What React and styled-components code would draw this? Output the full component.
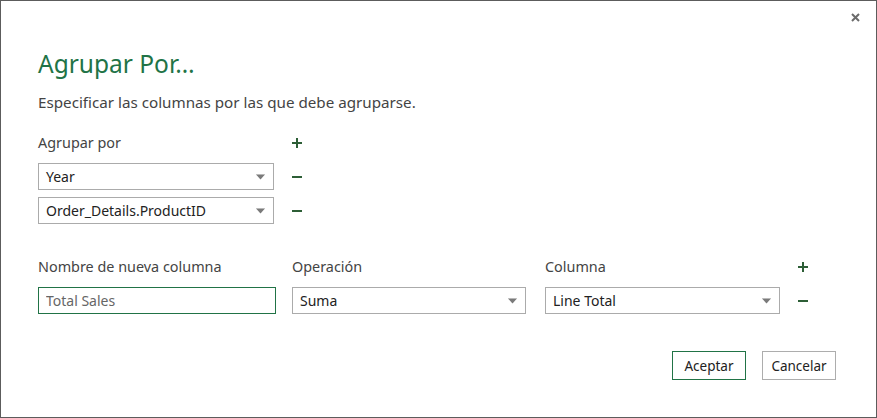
import styled, { createGlobalStyle } from 'styled-components'

const Global = createGlobalStyle`
  html, body { margin: 0; padding: 0; background: #fff; }
  * { box-sizing: border-box; }
`

const green = '#217346'
const iconGreen = '#2d5e36'

const Dialog = styled.div`
  position: relative;
  width: 877px; height: 418px;
  border: 1px solid #5c5c5c;
  padding: 47px 0 0 37px;
  font-family: "Noto Sans", "Open Sans", sans-serif;
  color: #444;
  display: flex; flex-direction: column;
`
const Close = styled.button`
  position: absolute; top: 12px; right: 16px;
  width: 9px; height: 9px; padding: 0; border: none; background: none;
  display: flex;
`
const Title = styled.h1`
  margin: 0; font-size: 24.5px; line-height: 32px; font-weight: 400; color: ${green};
`
const Subtitle = styled.p`
  margin: 12px 0 0; font-size: 15.2px; line-height: 20px; color: #444;
`
const Label = styled.div`
  font-size: 14.4px; line-height: 20px; color: #444;
  width: ${({ $w }) => $w}px;
`
const Row = styled.div`
  display: flex; align-items: center; gap: ${({ $gap }) => $gap ?? 18}px;
  margin-top: ${({ $mt }) => $mt}px;
`
const Group = styled.div`
  display: flex; align-items: center;
  gap: ${({ $gap }) => $gap}px;
`
const SelectBox = styled.div`
  width: ${({ $w }) => $w}px; height: 27px;
  border: 1px solid #ababab; background: #fff;
  display: flex; align-items: center; justify-content: space-between;
  padding: 0 8px 0 7px;
  font-size: 14px; color: #222;
`
const Input = styled.input`
  width: ${({ $w }) => $w}px; height: 27px;
  border: 1px solid ${green}; outline: none; padding: 0 7px;
  font-family: inherit; font-size: 14px; color: #666; background: #fff;
`
const IconBtn = styled.button`
  width: 10px; height: 10px; padding: 0; border: none; background: none;
  display: flex; flex-shrink: 0;
`
const Footer = styled.div`
  display: flex; justify-content: flex-end; gap: 16px;
  margin-top: 37px; padding-right: 40px;
`
const Button = styled.button`
  width: 74px; height: 29px; background: #fff;
  border: 1px solid ${({ $primary }) => ($primary ? green : '#adadad')};
  font-family: inherit; font-size: 13.5px; color: #222; padding: 0;
`

const Arrow = () => (
  <svg width="9" height="6" viewBox="0 0 9 6">
    <path d="M0 0.5h9L4.5 5.5z" fill="#7a7a7a" />
    <path d="M0.5 0.5h8" stroke="#b8b8b8" strokeWidth="1" />
  </svg>
)
const Plus = () => (
  <svg width="10" height="10" viewBox="0 0 10 10">
    <path d="M0 5h10M5 0v10" stroke={iconGreen} strokeWidth="2" />
  </svg>
)
const Minus = () => (
  <svg width="10" height="10" viewBox="0 0 10 10">
    <path d="M0 5h10" stroke={iconGreen} strokeWidth="2" />
  </svg>
)

const Select = ({ w, value }) => (
  <SelectBox $w={w}>
    <span>{value}</span>
    <Arrow />
  </SelectBox>
)

export default function App() {
  return (
    <>
      <Global />
      <Dialog>
        <Close aria-label="Cerrar">
          <svg width="9" height="9" viewBox="0 0 9 9">
            <path d="M1 1l7 7M8 1l-7 7" stroke="#6b6b6b" strokeWidth="2" />
          </svg>
        </Close>
        <Title>Agrupar Por…</Title>
        <Subtitle>Especificar las columnas por las que debe agruparse.</Subtitle>

        <Row $mt={21}>
          <Label $w={236}>Agrupar por</Label>
          <IconBtn><Plus /></IconBtn>
        </Row>
        <Row $mt={10}>
          <Select w={236} value="Year" />
          <IconBtn><Minus /></IconBtn>
        </Row>
        <Row $mt={7}>
          <Select w={236} value="Order_Details.ProductID" />
          <IconBtn><Minus /></IconBtn>
        </Row>

        <Row $mt={33}>
          <Group $gap={16}>
            <Label $w={238}>Nombre de nueva columna</Label>
            <Group $gap={19}>
              <Label $w={234}>Operación</Label>
              <Label $w={235}>Columna</Label>
            </Group>
          </Group>
          <IconBtn><Plus /></IconBtn>
        </Row>
        <Row $mt={10}>
          <Group $gap={16}>
            <Input $w={238} defaultValue="Total Sales" />
            <Group $gap={19}>
              <Select w={234} value="Suma" />
              <Select w={235} value="Line Total" />
            </Group>
          </Group>
          <IconBtn><Minus /></IconBtn>
        </Row>

        <Footer>
          <Button $primary>Aceptar</Button>
          <Button>Cancelar</Button>
        </Footer>
      </Dialog>
    </>
  )
}
